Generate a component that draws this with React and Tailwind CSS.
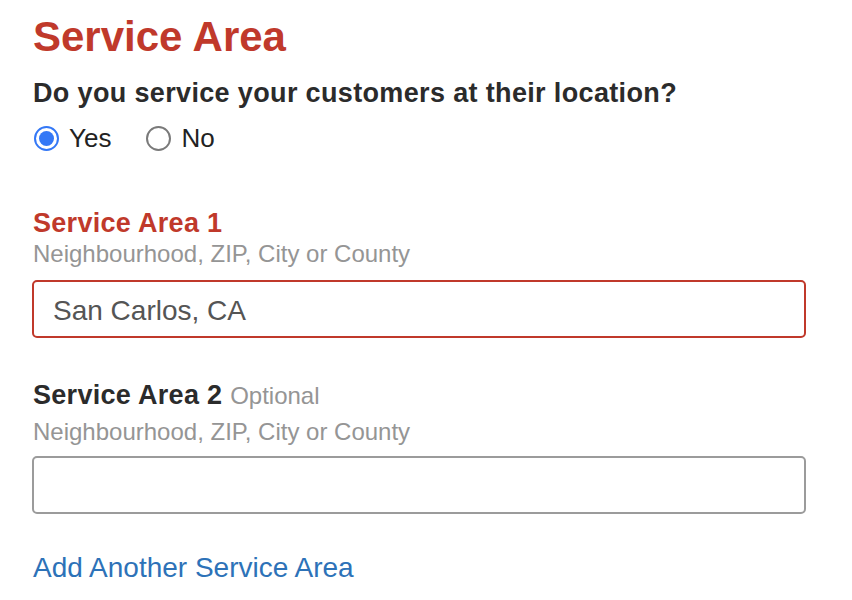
import React, { useState } from 'react';

function Radio({ checked, label, onClick }) {
  return (
    <label onClick={onClick} className="flex items-center cursor-pointer">
      <span
        className={`w-[25px] h-[25px] rounded-full border-2 flex items-center justify-center bg-white ${
          checked ? 'border-[#3478f6]' : 'border-[#7a7a7a]'
        }`}
      >
        {checked && <span className="w-[15px] h-[15px] rounded-full bg-[#3478f6]" />}
      </span>
      <span className="ml-[10px] text-[26px] leading-[32px] text-[#222]">{label}</span>
    </label>
  );
}

export default function App() {
  const [onSite, setOnSite] = useState(true);
  const [area1, setArea1] = useState('San Carlos, CA');
  const [area2, setArea2] = useState('');

  return (
    <div
      className="min-h-screen bg-white pl-[32px] pt-[13px]"
      style={{ fontFamily: '"Liberation Sans", Arial, sans-serif' }}
    >
      <div className="w-[774px]">
        {/* Heading */}
        <h1 className="pl-px text-[42px] leading-[48px] font-bold text-[#c0392b]">Service Area</h1>

        {/* Question */}
        <p className="pl-px mt-[16px] text-[27px] leading-[32px] font-bold tracking-[0.35px] text-[#2b2b2b]">
          Do you service your customers at their location?
        </p>
        <div className="pl-[2px] mt-[13px] flex items-center gap-[35px]">
          <Radio checked={onSite} label="Yes" onClick={() => setOnSite(true)} />
          <Radio checked={!onSite} label="No" onClick={() => setOnSite(false)} />
        </div>

        {/* Service Area 1 */}
        <h2 className="pl-px mt-[53px] text-[27px] leading-[32px] font-bold tracking-[0.3px] text-[#c0392b]">
          Service Area 1
        </h2>
        <p className="pl-px text-[24px] leading-[30px] text-[#959595]">Neighbourhood, ZIP, City or County</p>
        <input
          value={area1}
          onChange={(e) => setArea1(e.target.value)}
          className="mt-[11px] block w-full h-[58px] pt-[4px] px-[19px] border-2 border-[#c0392b] rounded-[5px] text-[28px] text-[#555] outline-none"
        />

        {/* Service Area 2 */}
        <h2 className="pl-px mt-[41px] text-[27px] leading-[32px] font-bold tracking-[0.3px] text-[#2b2b2b]">
          Service Area 2{' '}
          <span className="font-normal tracking-normal text-[24px] text-[#959595]">Optional</span>
        </h2>
        <p className="pl-px mt-[5px] text-[24px] leading-[30px] text-[#959595]">Neighbourhood, ZIP, City or County</p>
        <input
          value={area2}
          onChange={(e) => setArea2(e.target.value)}
          className="mt-[9px] block w-full h-[58px] pt-[4px] px-[19px] border-2 border-[#9b9b9b] rounded-[5px] text-[28px] text-[#555] outline-none"
        />

        <a href="#" className="pl-px mt-[37px] block text-[28px] leading-[34px] text-[#2d72b8]">
          Add Another Service Area
        </a>
      </div>
    </div>
  );
}
